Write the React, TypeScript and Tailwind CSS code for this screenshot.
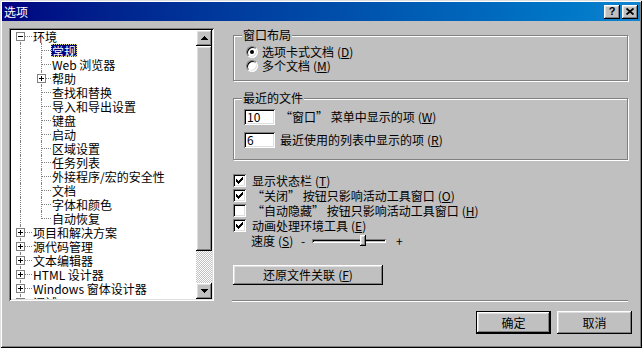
import React from 'react'

const raised =
  'shadow-[inset_-1px_-1px_0_#000,inset_1px_1px_0_#fff,inset_-2px_-2px_0_#808080,inset_2px_2px_0_#dfdfdf]'
const sunken =
  'shadow-[inset_1px_1px_0_#808080,inset_-1px_-1px_0_#fff,inset_2px_2px_0_#000,inset_-2px_-2px_0_#dfdfdf]'
const dots = 'border-dotted border-[#808080]'

type Item = {
  label: string
  level: 0 | 1
  box?: '+' | '-'
  selected?: boolean
  first?: boolean
  last?: boolean
}

const items: Item[] = [
  { label: '环境', level: 0, box: '-', first: true },
  { label: '常规', level: 1, selected: true },
  { label: 'Web 浏览器', level: 1 },
  { label: '帮助', level: 1, box: '+' },
  { label: '查找和替换', level: 1 },
  { label: '导入和导出设置', level: 1 },
  { label: '键盘', level: 1 },
  { label: '启动', level: 1 },
  { label: '区域设置', level: 1 },
  { label: '任务列表', level: 1 },
  { label: '外接程序/宏的安全性', level: 1 },
  { label: '文档', level: 1 },
  { label: '字体和颜色', level: 1 },
  { label: '自动恢复', level: 1, last: true },
  { label: '项目和解决方案', level: 0, box: '+' },
  { label: '源代码管理', level: 0, box: '+' },
  { label: '文本编辑器', level: 0, box: '+' },
  { label: 'HTML 设计器', level: 0, box: '+' },
  { label: 'Windows 窗体设计器', level: 0, box: '+' },
  { label: '调试', level: 0, box: '+' },
]

function Mn({ k }: { k: string }) {
  return (
    <span className="ml-[3px]">
      (<u className="underline-offset-[1px]">{k}</u>)
    </span>
  )
}

function ExpandBox({ sign, level }: { sign: '+' | '-'; level: 0 | 1 }) {
  return (
    <span
      className={`absolute top-[3px] w-[9px] h-[9px] border border-[#808080] bg-white ${
        level === 0 ? 'left-[5px]' : 'left-[26px]'
      }`}
    >
      <svg width="7" height="7" className="block" shapeRendering="crispEdges">
        <rect x="1" y="3" width="5" height="1" fill="#000" />
        {sign === '+' && <rect x="3" y="1" width="1" height="5" fill="#000" />}
      </svg>
    </span>
  )
}

function TreeRow({ item }: { item: Item }) {
  return (
    <div className="relative h-[14px] flex items-center shrink-0">
      <span
        className={`absolute left-[9px] border-l ${dots} ${
          item.first ? 'top-[7px] bottom-0' : 'top-0 bottom-0'
        }`}
      />
      {item.level === 0 && (
        <span className={`absolute left-[14px] top-[7px] w-[7px] border-t ${dots}`} />
      )}
      {item.level === 1 && (
        <>
          <span
            className={`absolute left-[30px] top-0 border-l ${dots} ${
              item.last ? 'h-[8px]' : 'bottom-0'
            }`}
          />
          <span className={`absolute left-[31px] top-[7px] w-[9px] border-t ${dots}`} />
        </>
      )}
      {item.box && <ExpandBox sign={item.box} level={item.level} />}
      <span
        className={`relative h-[13px] leading-[13px] whitespace-nowrap ${
          item.level === 0 ? 'ml-[21px]' : 'ml-[40px]'
        } ${
          item.selected
            ? 'bg-[#000080] text-white border border-dotted border-[#e0e070]'
            : 'px-[1px]'
        }`}
      >
        {item.label}
      </span>
    </div>
  )
}

function Arrow({ up }: { up?: boolean }) {
  return (
    <svg width="7" height="4" shapeRendering="crispEdges" className={up ? '' : 'rotate-180'}>
      <rect x="3" y="0" width="1" height="1" fill="#000" />
      <rect x="2" y="1" width="3" height="1" fill="#000" />
      <rect x="1" y="2" width="5" height="1" fill="#000" />
      <rect x="0" y="3" width="7" height="1" fill="#000" />
    </svg>
  )
}

function ScrollBtn({ up }: { up?: boolean }) {
  return (
    <div className={`h-[16px] bg-[#c0c0c0] ${raised} flex items-center justify-center`}>
      <Arrow up={up} />
    </div>
  )
}

function Radio({ checked }: { checked?: boolean }) {
  return (
    <span className="w-[12px] h-[12px] rounded-full bg-white border border-t-[#808080] border-l-[#808080] border-b-white border-r-white shadow-[inset_1px_1px_0_#000,inset_-1px_-1px_0_#dfdfdf] flex items-center justify-center shrink-0">
      {checked && <span className="w-[4px] h-[4px] rounded-full bg-black" />}
    </span>
  )
}

function Check({ checked }: { checked?: boolean }) {
  return (
    <span className={`w-[13px] h-[13px] bg-white ${sunken} flex items-center justify-center shrink-0`}>
      {checked && (
        <svg width="7" height="7" shapeRendering="crispEdges">
          <rect x="0" y="2" width="1" height="3" fill="#000" />
          <rect x="1" y="3" width="1" height="3" fill="#000" />
          <rect x="2" y="4" width="1" height="3" fill="#000" />
          <rect x="3" y="3" width="1" height="3" fill="#000" />
          <rect x="4" y="2" width="1" height="3" fill="#000" />
          <rect x="5" y="1" width="1" height="3" fill="#000" />
          <rect x="6" y="0" width="1" height="3" fill="#000" />
        </svg>
      )}
    </span>
  )
}

function Group({ title, className, children }: { title: string; className: string; children: React.ReactNode }) {
  return (
    <div
      className={`relative border border-[#808080] shadow-[1px_1px_0_#fff,inset_1px_1px_0_#fff] ${className}`}
    >
      <span className="absolute -top-[7px] left-[8px] px-[1px] bg-[#c0c0c0] leading-[12px]">{title}</span>
      {children}
    </div>
  )
}

export default function App() {
  const checks: [boolean, React.ReactNode][] = [
    [true, <>显示状态栏<Mn k="T" /></>],
    [true, <>“关闭” 按钮只影响活动工具窗口<Mn k="O" /></>],
    [false, <>“自动隐藏” 按钮只影响活动工具窗口<Mn k="H" /></>],
    [true, <>动画处理环境工具<Mn k="E" /></>],
  ]

  return (
    <div className="w-[642px] h-[348px] bg-[#c0c0c0] p-[2px] flex flex-col text-[12px] leading-[14px] text-black font-['Noto_Sans_CJK_SC','Noto_Sans',sans-serif] shadow-[inset_1px_1px_0_#dfdfdf,inset_-1px_-1px_0_#000,inset_2px_2px_0_#fff,inset_-2px_-2px_0_#808080]">
      {/* Title bar */}
      <div className="h-[19px] flex items-center justify-between bg-linear-to-r from-[#000080] to-[#1084d0] pl-[2px] pr-[2px] shrink-0">
        <span className="text-white text-[12px] leading-[12px]">选项</span>
        <div className="flex gap-[2px]">
          <div className={`w-[16px] h-[14px] bg-[#c0c0c0] ${raised} flex items-center justify-center text-[11px] font-bold leading-none font-['Liberation_Sans',sans-serif]`}>
            ?
          </div>
          <div className={`w-[16px] h-[14px] bg-[#c0c0c0] ${raised} flex items-center justify-center`}>
            <svg width="8" height="7">
              <path d="M0.5 0.5 L7.5 6.5 M7.5 0.5 L0.5 6.5" stroke="#000" strokeWidth="1.8" />
            </svg>
          </div>
        </div>
      </div>

      {/* Body */}
      <div className="flex flex-row pl-[7px] pt-[7px]">
        {/* Tree */}
        <div className={`w-[205px] h-[273px] bg-white ${sunken} p-[2px] flex shrink-0`}>
          <div className="flex-1 overflow-hidden flex flex-col -mt-px">
            {items.map((it) => (
              <TreeRow key={it.label} item={it} />
            ))}
          </div>
          <div className="w-[16px] flex flex-col shrink-0">
            <ScrollBtn up />
            <div className={`h-[205px] bg-[#c0c0c0] ${raised}`} />
            <div className="flex-1 bg-[image:repeating-conic-gradient(#fff_0_25%,#c0c0c0_0_50%)] bg-[length:2px_2px]" />
            <ScrollBtn />
          </div>
        </div>

        {/* Right column */}
        <div className="ml-[19px] w-[395px] flex flex-col">
          <Group title="窗口布局" className="mt-[7px] h-[46px] pt-[9px] pl-[12px]">
            <div className="h-[14px] flex items-center gap-[4px]">
              <Radio checked />
              <span>选项卡式文档<Mn k="D" /></span>
            </div>
            <div className="h-[14px] flex items-center gap-[4px]">
              <Radio />
              <span>多个文档<Mn k="M" /></span>
            </div>
          </Group>

          <Group title="最近的文件" className="mt-[17px] h-[62px] pt-[10px] pl-[10px] flex flex-col gap-[7px]">
            <div className="h-[16px] flex items-center">
              <div className={`w-[31px] h-[16px] bg-white ${sunken} pl-[3px] flex items-center`}>10</div>
              <span className="ml-[5px]">“窗口” 菜单中显示的项<Mn k="W" /></span>
            </div>
            <div className="h-[16px] flex items-center">
              <div className={`w-[31px] h-[16px] bg-white ${sunken} pl-[3px] flex items-center`}>6</div>
              <span className="ml-[5px]">最近使用的列表中显示的项<Mn k="R" /></span>
            </div>
          </Group>

          <div className="mt-[13px] flex flex-col">
            {checks.map(([on, label], i) => (
              <div key={i} className="h-[15px] flex items-center gap-[6px]">
                <Check checked={on} />
                <span className="whitespace-nowrap">{label}</span>
              </div>
            ))}
          </div>

          {/* Speed slider */}
          <div className="h-[15px] flex items-center pl-[18px]">
            <span className="w-[50px]">速度<Mn k="S" /></span>
            <span className="w-[11px]">-</span>
            <div className="relative w-[74px] h-[4px] shadow-[inset_1px_1px_0_#808080,inset_-1px_-1px_0_#fff,inset_2px_2px_0_#000]">
              <span className={`absolute left-[48px] -top-[4px] w-[6px] h-[11px] bg-[#c0c0c0] ${raised}`} />
            </div>
            <span className="ml-[10px]">+</span>
          </div>

          <button
            className={`mt-[17px] w-[150px] h-[20px] bg-[#c0c0c0] ${raised} flex items-center justify-center`}
          >
            还原文件关联<Mn k="F" />
          </button>

          <div className="mt-[15px] -ml-px w-[396px] h-[2px] border-t border-[#808080] border-b border-b-white" />
        </div>
      </div>

      {/* Dialog buttons */}
      <div className="mt-[9px] flex justify-end gap-[6px] pr-[8px]">
        <button className="w-[75px] h-[23px] border border-black bg-[#c0c0c0]">
          <div className={`w-full h-full ${raised} flex items-center justify-center`}>确定</div>
        </button>
        <button className={`w-[75px] h-[23px] bg-[#c0c0c0] ${raised} flex items-center justify-center`}>
          取消
        </button>
      </div>
    </div>
  )
}
